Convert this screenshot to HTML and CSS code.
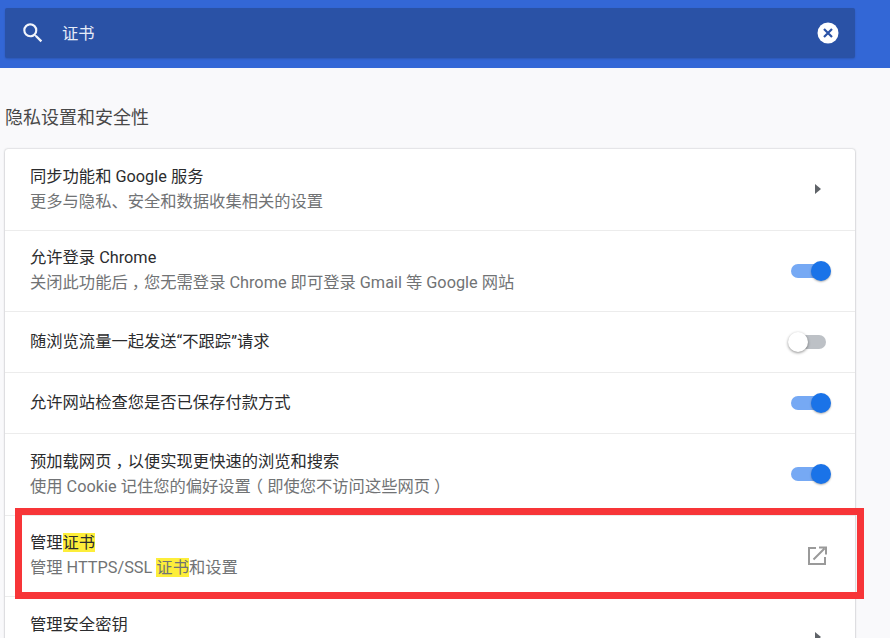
FILE: index.html
```html
<!DOCTYPE html>
<html lang="zh-CN">
<head>
<meta charset="utf-8">
<title>设置</title>
<link rel="stylesheet" href="styles.css">
</head>
<body>
<header class="topbar">
  <div class="search">
    <svg class="search-icon" viewBox="0 0 24 24" width="26" height="26"><path fill="#f2f5fb" d="M15.5 14h-.79l-.28-.27A6.47 6.47 0 0 0 16 9.5 6.5 6.5 0 1 0 9.5 16c1.61 0 3.09-.59 4.23-1.57l.27.28v.79l5 4.99L20.49 19l-4.99-5zm-6 0C7.01 14 5 11.99 5 9.5S7.01 5 9.5 5 14 7.01 14 9.5 11.99 14 9.5 14z"/></svg>
    <span class="search-text">证书</span>
    <svg class="clear-icon" viewBox="0 0 22 22" width="22" height="22"><circle cx="11" cy="11" r="10.5" fill="#fff"/><path d="M7 7l8 8M15 7l-8 8" stroke="#2a52a6" stroke-width="2.2" fill="none"/></svg>
  </div>
</header>
<main class="content">
  <h2 class="section-title">隐私设置和安全性</h2>
  <section class="card">
    <div class="row row-two row-first">
      <div class="texts"><div class="primary">同步功能和 Google 服务</div><div class="secondary">更多与隐私、安全和数据收集相关的设置</div></div>
      <span class="arrow"></span>
    </div>
    <div class="row row-two">
      <div class="texts"><div class="primary">允许登录 Chrome</div><div class="secondary">关闭此功能后<span class="punct">，</span>您无需登录 Chrome 即可登录 Gmail 等 Google 网站</div></div>
      <span class="toggle on"></span>
    </div>
    <div class="row row-one">
      <div class="texts"><div class="primary">随浏览流量一起发送“不跟踪”请求</div></div>
      <span class="toggle off"></span>
    </div>
    <div class="row row-one">
      <div class="texts"><div class="primary">允许网站检查您是否已保存付款方式</div></div>
      <span class="toggle on"></span>
    </div>
    <div class="row row-two">
      <div class="texts"><div class="primary">预加载网页<span class="punct">，</span>以便实现更快速的浏览和搜索</div><div class="secondary">使用 Cookie 记住您的偏好设置<span class="punct">（</span>即使您不访问这些网页<span class="punct">）</span></div></div>
      <span class="toggle on"></span>
    </div>
    <div class="row row-two">
      <div class="texts"><div class="primary">管理<mark class="hit">证书</mark></div><div class="secondary">管理 HTTPS/SSL <mark class="hit">证书</mark>和设置</div></div>
      <svg class="external" viewBox="0 0 20 20" width="20" height="20"><path fill="none" stroke="#9a9a9a" stroke-width="2" d="M9 2H2v16h16v-7"/><path fill="none" stroke="#9a9a9a" stroke-width="2" d="M6.5 13.5L17.5 2.5M12 1.5h7v7"/></svg>
    </div>
    <div class="row row-two">
      <div class="texts"><div class="primary">管理安全密钥</div><div class="secondary">&nbsp;</div></div>
      <span class="arrow"></span>
    </div>
  </section>
</main>
<div class="highlight-box"></div>
</body>
</html>
```

FILE: styles.css
```css
html, body {
  margin: 0;
  height: 638px;
  overflow: hidden;
  background: #f9f9fb;
  font-family: "Roboto", "Noto Sans CJK SC", sans-serif;
}
.topbar {
  height: 68px;
  box-sizing: border-box;
  background: #3367d6;
  padding: 8px 35px 10px 5px;
}
.search {
  height: 50px;
  display: flex;
  align-items: center;
  background: #2a52a6;
  border-radius: 2px;
  box-shadow: 0 1px 2px rgba(0, 0, 0, 0.15);
  padding: 0 16px 0 15px;
}
.search-text {
  margin-left: 16px;
  margin-top: -2px;
  font-size: 16.3px;
  color: #e6ecf8;
  flex: 1;
}
.content {
  padding: 0 35px 0 5px;
}
.section-title {
  margin: 0;
  padding-top: 37px;
  height: 44px;
  line-height: 26px;
  font-size: 18px;
  font-weight: 400;
  color: #484848;
}
.card {
  background: #fff;
  border-radius: 3px;
  box-shadow: 0 0 2px rgba(60, 64, 67, 0.35), 0 1px 2px rgba(60, 64, 67, 0.2);
}
.row {
  display: flex;
  align-items: center;
  box-sizing: border-box;
  padding: 0 24px 0 25px;
  border-top: 1px solid #ececec;
}
.row-two {
  height: 81.5px;
}
.row-first {
  border-top: none;
  height: 80.6px;
}
.row-one {
  height: 61px;
}
.texts {
  flex: 1;
}
.primary {
  font-size: 16.3px;
  line-height: 24px;
  color: #2b2c2e;
}
.secondary {
  margin-top: 1px;
  font-size: 16.3px;
  line-height: 24px;
  color: #717375;
}
.punct {
  display: inline-block;
  width: 1em;
  text-align: center;
  font-feature-settings: "halt";
}
.hit {
  background: #fdee3a;
  color: inherit;
}
.arrow {
  width: 0;
  height: 0;
  margin-right: 10px;
  border-left: 6px solid #5f6368;
  border-top: 5px solid transparent;
  border-bottom: 5px solid transparent;
}
.toggle {
  position: relative;
  display: block;
  width: 35px;
  height: 14px;
  margin-right: 5px;
  border-radius: 7px;
}
.toggle::after {
  content: "";
  position: absolute;
  top: -3px;
  width: 20px;
  height: 20px;
  border-radius: 50%;
}
.toggle.on {
  background: #76a9f4;
}
.toggle.on::after {
  right: -5px;
  background: #1a73e8;
  box-shadow: 0 1px 2px rgba(0, 0, 0, 0.3);
}
.toggle.off {
  background: #bdc1c6;
}
.toggle.off::after {
  left: -3px;
  background: #fff;
  box-shadow: 0 1px 3px rgba(0, 0, 0, 0.45);
}
.external {
  margin-right: 4px;
}
.highlight-box {
  position: absolute;
  left: 15px;
  top: 508px;
  width: 849px;
  height: 91px;
  box-sizing: border-box;
  border: 7px solid #f73538;
}
```
